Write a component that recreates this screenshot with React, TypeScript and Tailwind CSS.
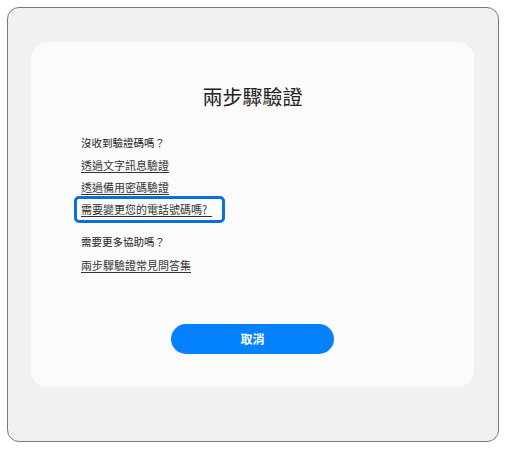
const font = {
  fontFamily: '"Noto Sans CJK TC", "Noto Sans", sans-serif',
};

export default function App() {
  return (
    <div className="min-h-[451px] w-[509px] bg-white pl-[7px] pt-[7px]" style={font}>
      <div className="h-[435px] w-[492px] rounded-[12px] border border-[#7a7a7a] bg-[#f1f1f1] pl-[23px] pt-[34px]">
        <div className="flex h-[345px] w-[443px] flex-col rounded-[16px] bg-[#fbfbfb] pl-[50px] pt-[41px]">
          <h1 className="-ml-[50px] text-center text-[20px] leading-[28px] font-normal text-[#222]">
            兩步驟驗證
          </h1>

          <p className="mt-[21px] text-[10.5px] leading-[22px] text-[#222]">沒收到驗證碼嗎？</p>
          <a className="w-fit text-[11px] leading-[22px] text-[#333] underline underline-offset-2">
            透過文字訊息驗證
          </a>
          <a className="w-fit text-[11px] leading-[22px] text-[#333] underline underline-offset-2">
            透過備用密碼驗證
          </a>
          <a className="-mb-[3px] -ml-[7px] -mt-[2px] flex h-[27px] w-[151px] items-center rounded-[5px] border-[3px] border-[#0a6fd9] pl-[4px] text-[11px] text-[#333] underline underline-offset-2">
            需要變更您的電話號碼嗎?&nbsp;&nbsp;
          </a>

          <p className="mt-[11px] text-[10.5px] leading-[22px] text-[#222]">需要更多協助嗎？</p>
          <a className="mt-[1px] w-fit text-[11px] leading-[22px] text-[#333] underline underline-offset-2">
            兩步驟驗證常見問答集
          </a>

          <div className="-ml-[50px] mt-[48px] flex justify-center">
            <button className="h-[30px] w-[163px] rounded-full bg-[#0381fe] text-[12px] font-bold text-white">
              取消
            </button>
          </div>
        </div>
      </div>
    </div>
  );
}
